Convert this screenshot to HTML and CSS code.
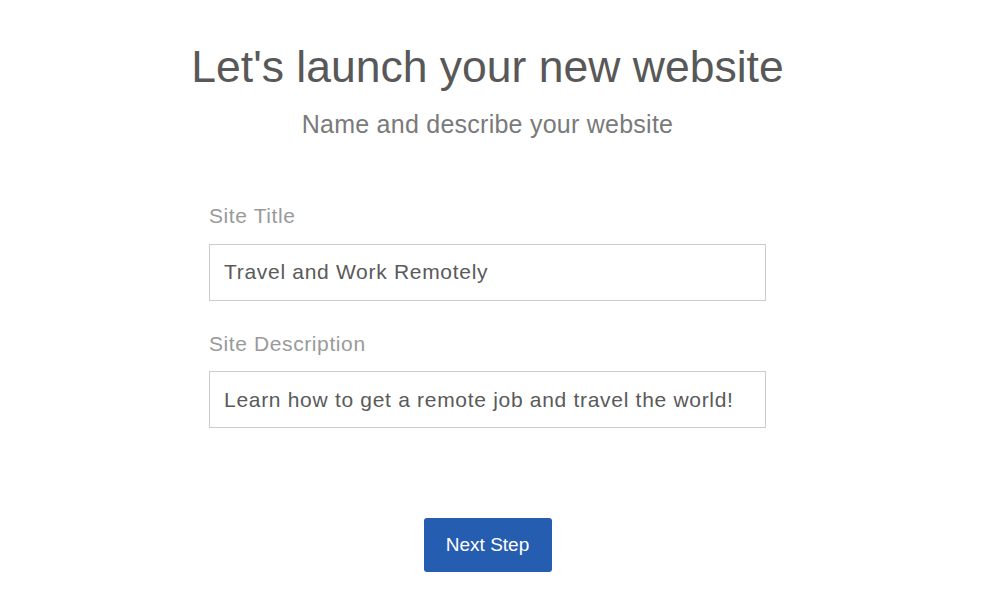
FILE: index.html
```html
<!DOCTYPE html>
<html lang="en">
<head>
    <meta charset="UTF-8">
    <meta name="viewport" content="width=device-width, initial-scale=1.0">
    <title>Launch your website</title>
    <link rel="stylesheet" href="styles.css">
</head>
<body>
    <div class="page">
        <h1>Let's launch your new website</h1>
        <p class="subtitle">Name and describe your website</p>

        <form class="site-form">
            <label class="field">
                <span class="field-label">Site Title</span>
                <input type="text" value="Travel and Work Remotely">
            </label>
            <label class="field">
                <span class="field-label">Site Description</span>
                <input type="text" value="Learn how to get a remote job and travel the world!">
            </label>
            <div class="actions">
                <button type="button" class="next-btn">Next Step</button>
            </div>
        </form>
    </div>
</body>
</html>
```

FILE: styles.css
```css
body {
    margin: 0;
    font-family: "Liberation Sans", Arial, sans-serif;
    background-color: #fff;
    color: #555;
}

.page {
    width: 975px;
    display: flex;
    flex-direction: column;
    align-items: center;
    padding-top: 40px;
}

h1 {
    font-size: 44.5px;
    font-weight: normal;
    color: #585858;
    margin: 0;
    line-height: 54px;
}

.subtitle {
    font-size: 25px;
    letter-spacing: 0.25px;
    color: #7a7a7a;
    margin: 15px 0 0;
    line-height: 30px;
}

.site-form {
    width: 557px;
    margin-top: 65px;
    display: flex;
    flex-direction: column;
}

.field {
    display: flex;
    flex-direction: column;
}

.field + .field {
    margin-top: 31px;
}

.field-label {
    font-size: 21px;
    letter-spacing: 0.6px;
    color: #9a9a9a;
    line-height: 24px;
    margin-bottom: 15.5px;
}

.field input {
    box-sizing: border-box;
    width: 100%;
    height: 57px;
    border: 1px solid #ccc;
    padding: 0 14px;
    font-family: inherit;
    font-size: 21px;
    letter-spacing: 0.7px;
    color: #5a5a5a;
    outline: none;
}

.actions {
    display: flex;
    justify-content: center;
    margin-top: 90px;
}

.next-btn {
    width: 128px;
    height: 54px;
    background-color: #255db0;
    color: #fff;
    border: none;
    border-radius: 3px;
    font-family: inherit;
    font-size: 19px;
    cursor: pointer;
}
```
